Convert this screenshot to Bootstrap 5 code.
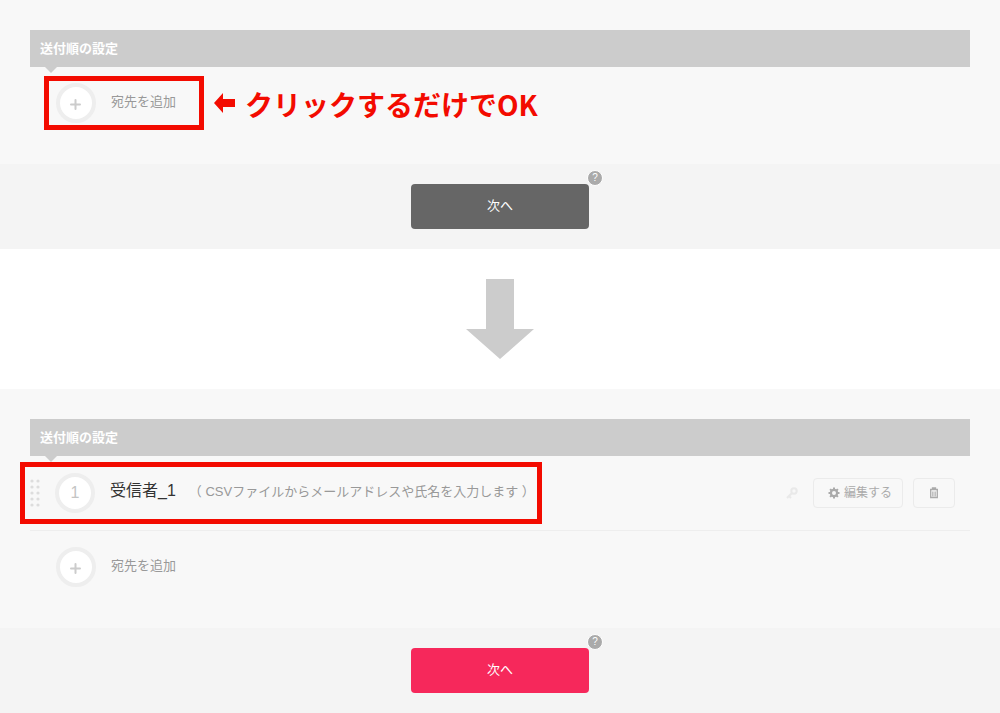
<!DOCTYPE html>
<html lang="ja">
<head>
<meta charset="utf-8">
<meta name="viewport" content="width=device-width, initial-scale=1">
<title>送付順の設定</title>
<link href="https://cdn.jsdelivr.net/npm/bootstrap@5.3.0/dist/css/bootstrap.min.css" rel="stylesheet">
<style>
  body { font-family: "Liberation Sans", "Noto Sans CJK JP", sans-serif; font-size: 13px; line-height: 20px; color: #999; background: #fff; }
  .order-panel { background: #f8f8f8; padding: 30px 30px 41px; }
  .order-title { position: relative; height: 37px; padding: 0 10px; background: #ccc; color: #fff; font-size: 13px; font-weight: 700; line-height: 38px; }
  .order-title::after { content: ""; position: absolute; left: 15px; top: 100%; border: 6px solid transparent; border-top-color: #ccc; border-bottom: 0; }
  .add-row { padding: 16px 0 0 26px; }
  .add-btn { color: #999; background: none; border: 0; padding: 0; gap: 15px; }
  .add-btn span:last-child { padding-bottom: 2px; }
  .ring { width: 40px; height: 40px; flex: none; border: 4px solid #eee; background: #fff; color: #c4c4c4; font-size: 16px; }
  .marked { position: relative; }
  .marked::after { content: ""; position: absolute; border: 5px solid #f30b00; inset: -7px -28px -7px -12px; pointer-events: none; }
  .recipient-main.marked::after { inset: -11px -7px -11px -10px; }
  .hint { margin-left: 38px; gap: 10px; color: #f30b00; font: 700 28px/38px "Noto Sans CJK JP", sans-serif; }
  .hint span { padding-top: 2px; }
  .recipient { padding: 17px 15px 17px 0; border-bottom: 1px solid #eee; }
  .recipient-main { gap: 15px; }
  .recipient-name { color: #333; font-size: 16px; }
  .recipient-text { gap: 13px; padding-bottom: 4px; }
  .recipient-note { padding-top: 2px; }
  .tool-btn { height: 30px; border: 1px solid #ebebeb; border-radius: 4px; background: none; color: #aaa; font-size: 12px; padding: 0; gap: 4px; }
  .edit-btn { width: 90px; margin: 0 10px 0 15px; padding-left: 4px; }
  .trash-btn { width: 42px; }
  .order-footer { background: #f4f4f4; padding: 20px; }
  .next-btn { width: 178px; height: 45px; border: 0; border-radius: 4px; background: #666; color: #fff; font-size: 13px; padding: 0 0 2px; }
  .next-btn.ready { background: #f6285b; }
  .help-btn { position: absolute; left: 100%; top: -14px; margin-left: -2px; width: 16px; height: 16px; padding: 0; border: 1px solid #fff; background: #aaa; color: #fff; font-size: 10px; line-height: 14px; }
  .step-arrow { padding: 30px 0; }
</style>
</head>
<body>
<main>
  <section>
    <div class="order-panel">
      <h2 class="order-title mb-0">送付順の設定</h2>
      <div class="add-row d-flex align-items-center">
        <button type="button" class="add-btn marked d-flex align-items-center">
          <span class="ring rounded-circle d-flex align-items-center justify-content-center"><svg width="12" height="12" viewBox="0 0 12 12" class="mt-1" aria-hidden="true"><path d="M5.500 1v9M1 5.500h9" stroke="#ccc" stroke-width="2" stroke-linecap="round"/></svg></span>
          <span>宛先を追加</span>
        </button>
        <div class="hint d-flex align-items-center">
          <svg width="21" height="20" viewBox="0 0 21 20" fill="currentColor" aria-hidden="true"><path d="M0 10 9 0v6h12v8H9v6z"/></svg>
          <span>クリックするだけでOK</span>
        </div>
      </div>
    </div>
    <div class="order-footer d-flex justify-content-center">
      <div class="position-relative d-flex">
        <button type="button" class="next-btn">次へ</button>
        <button type="button" class="help-btn rounded-circle" aria-label="ヘルプ">?</button>
      </div>
    </div>
  </section>

  <div class="step-arrow d-flex justify-content-center">
    <svg width="68" height="80" viewBox="0 0 68 80" fill="#ccc" aria-hidden="true"><path d="M20 0h28v50h20L34 80 0 50h20z"/></svg>
  </div>

  <section>
    <div class="order-panel">
      <h2 class="order-title mb-0">送付順の設定</h2>
      <div class="recipient d-flex align-items-center justify-content-between">
        <div class="recipient-main marked d-flex align-items-center">
          <svg width="10" height="28" viewBox="0 0 10 28" fill="#ddd" aria-hidden="true"><g id="dots"><circle cx="2" cy="2" r="1.6"/><circle cx="2" cy="8" r="1.6"/><circle cx="2" cy="14" r="1.6"/><circle cx="2" cy="20" r="1.6"/><circle cx="2" cy="26" r="1.6"/></g><use href="#dots" x="6"/></svg>
          <span class="ring rounded-circle d-flex align-items-center justify-content-center">1</span>
          <div class="recipient-text d-flex align-items-center">
            <span class="recipient-name">受信者_1</span>
            <span class="recipient-note">（ CSVファイルからメールアドレスや氏名を入力します ）</span>
          </div>
        </div>
        <div class="d-flex align-items-center">
          <svg width="12" height="12" viewBox="0 0 12 12" fill="none" stroke="#e9e9e9" stroke-width="2" aria-hidden="true"><circle cx="8" cy="4" r="2.7"/><path d="M6 6 1 11M3 9l2 2"/></svg>
          <button type="button" class="tool-btn edit-btn d-flex align-items-center justify-content-center">
            <svg width="12" height="12" viewBox="0 0 12 12" fill="none" stroke="currentColor" aria-hidden="true"><circle cx="6" cy="6" r="3.1" stroke-width="2.2"/><path d="M6 .5v2M6 9.500v2M.5 6h2M9.500 6h2M2.100 2.100l1.400 1.400M8.500 8.500l1.400 1.400M9.900 2.100 8.500 3.500M3.500 8.500 2.100 9.900" stroke-width="2"/></svg>
            <span>編集する</span>
          </button>
          <button type="button" class="tool-btn trash-btn d-flex align-items-center justify-content-center" aria-label="削除">
            <svg width="10" height="12" viewBox="0 0 10 12" fill="none" stroke="currentColor" aria-hidden="true"><path d="M1 2.500h8M3.500 2V1h3v1M1.700 3v7.500h6.600V3" stroke-width="1.300"/><path d="M3.600 4.500v5M5 4.500v5M6.400 4.500v5" stroke-width=".8"/></svg>
          </button>
        </div>
      </div>
      <div class="add-row d-flex align-items-center">
        <button type="button" class="add-btn d-flex align-items-center">
          <span class="ring rounded-circle d-flex align-items-center justify-content-center"><svg width="12" height="12" viewBox="0 0 12 12" class="mt-1" aria-hidden="true"><path d="M5.500 1v9M1 5.500h9" stroke="#ccc" stroke-width="2" stroke-linecap="round"/></svg></span>
          <span>宛先を追加</span>
        </button>
      </div>
    </div>
    <div class="order-footer d-flex justify-content-center">
      <div class="position-relative d-flex">
        <button type="button" class="next-btn ready">次へ</button>
        <button type="button" class="help-btn rounded-circle" aria-label="ヘルプ">?</button>
      </div>
    </div>
  </section>
</main>
<script src="https://cdn.jsdelivr.net/npm/bootstrap@5.3.0/dist/js/bootstrap.bundle.min.js"></script>
</body>
</html>
